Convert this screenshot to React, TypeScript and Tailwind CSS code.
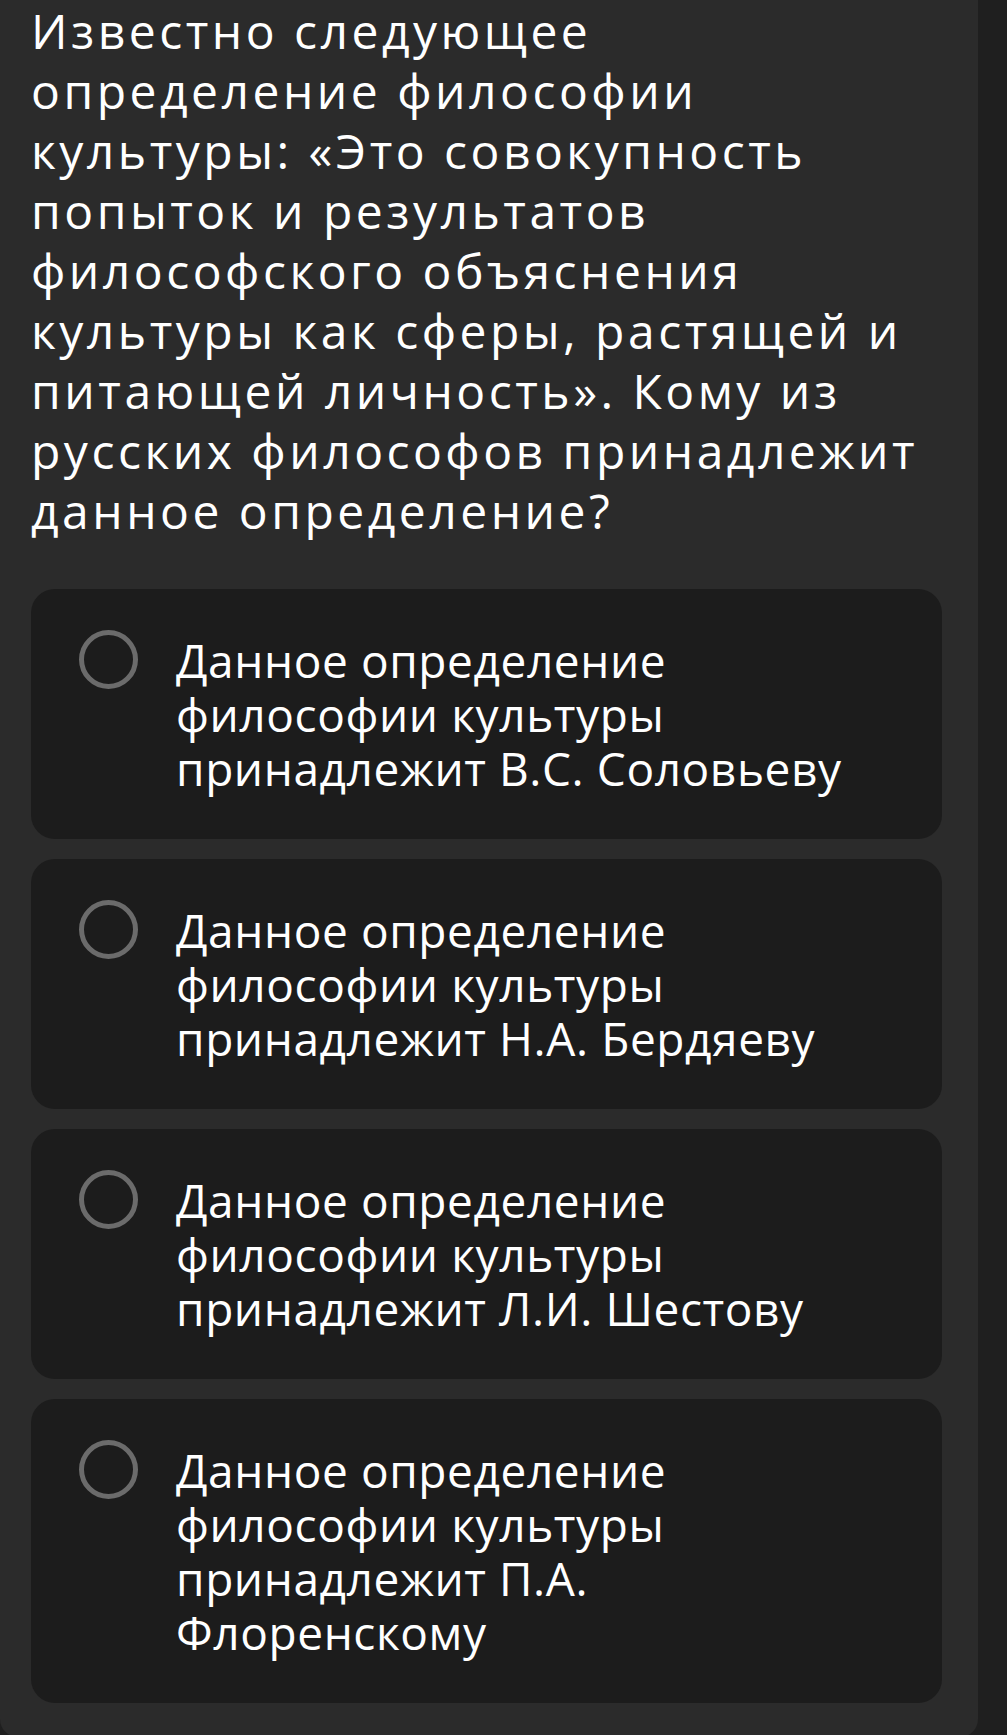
import React from 'react';

const options = [
  'Данное определение философии культуры принадлежит В.С. Соловьеву',
  'Данное определение философии культуры принадлежит Н.А. Бердяеву',
  'Данное определение философии культуры принадлежит Л.И. Шестову',
  'Данное определение философии культуры принадлежит П.А. Флоренскому',
];

const Option: React.FC<{ text: string }> = ({ text }) => (
  <div className="flex items-start rounded-[24px] bg-[#1c1c1c] pl-[48px] pr-[72px] py-[44px]">
    <div className="mt-[-3px] h-[59px] w-[59px] shrink-0 rounded-full border-[5px] border-[#6b6b6b]" />
    <p className="ml-[38px] flex-1 text-[46px] leading-[54px] tracking-[0.6px] text-white">{text}</p>
  </div>
);

export default function App() {
  return (
    <div
      className="min-h-[1735px] w-full bg-[#1f1f1f]"
      style={{ fontFamily: '"Open Sans", "Noto Sans", sans-serif' }}
    >
      <div className="w-[978px] rounded-b-[18px] bg-[#2b2b2b] pl-[31px] pr-[28px] pt-[1px] pb-[34px]">
        <h1 className="text-[48px] font-medium leading-[60px] tracking-[3.5px] text-white">
          Известно следующее определение философии культуры: «Это совокупность попыток и результатов философского
          объяснения культуры как сферы, растящей и питающей личность». Кому из русских философов принадлежит данное
          определение?
        </h1>
        <div className="mt-[48px] flex flex-col gap-[20px] pr-[8px]">
          {options.map((o) => (
            <Option key={o} text={o} />
          ))}
        </div>
      </div>
    </div>
  );
}
